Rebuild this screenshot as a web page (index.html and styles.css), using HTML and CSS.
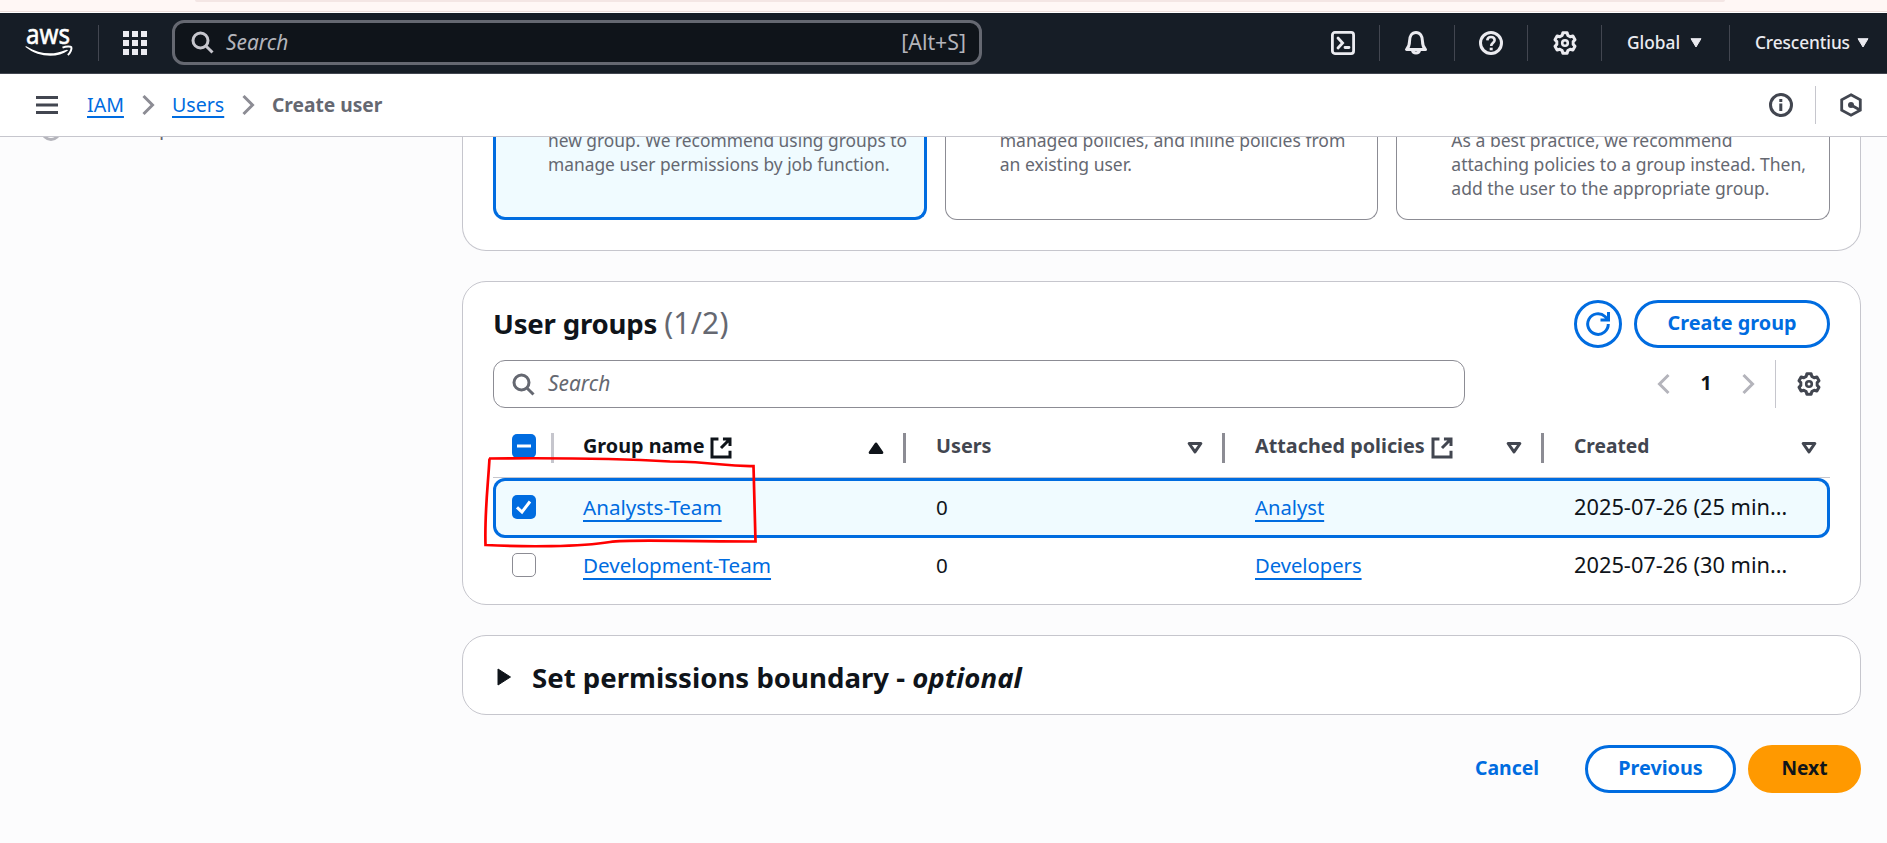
FILE: index.html
```html
<!DOCTYPE html>
<html lang="en">
<head>
<meta charset="utf-8">
<title>Create user | IAM</title>
<link rel="stylesheet" href="styles.css">
</head>
<body>
<svg class="defs" width="0" height="0">
  <symbol id="gear" viewBox="0 0 24 24"><path d="M9.9 1.7H14.1L14.8 4.4L17.2 5.8L19.9 5L22 8.7L20.2 10.6V13.4L22 15.3L19.9 19L17.2 18.2L14.8 19.6L14.1 22.3H9.9L9.2 19.6L6.8 18.2L4.1 19L2 15.3L3.8 13.4V10.6L2 8.7L4.1 5L6.8 5.8L9.2 4.4Z" stroke-width="3" stroke-linejoin="round"/><circle cx="12" cy="12" r="2.8" stroke-width="2.6"/></symbol>
  <symbol id="search" viewBox="0 0 16 16"><circle cx="7" cy="7" r="5"/><path d="M10.8 10.8 15 15"/></symbol>
  <symbol id="external" viewBox="0 0 16 16"><path d="M6.3 2H2v12h12v-4.2M9.3 2H14v4.6M13.8 2.2 8 8"/></symbol>
  <symbol id="sort" viewBox="0 0 16 16"><path d="M4.1 5h7.8L8 10.6Z" stroke-linejoin="round"/></symbol>
  <symbol id="right" viewBox="0 0 16 16"><path d="m5 2 6 6-6 6"/></symbol>
</svg>

<div class="browser-edge"><div class="address-bar"></div></div>

<header class="topnav">
  <svg class="logo" viewBox="0 0 48 32" width="48" height="32">
    <text x="1" y="17" textLength="44" lengthAdjust="spacingAndGlyphs">aws</text>
    <path class="smile" d="M.5 20C14 31 33 31 43 23.5C42.500 22.500 41.500 22.700 40 23.300C28 28.500 14 27 1.700 19.500C1 19.100.1 19.500.5 20Z"/>
    <path class="tip" d="M37.500 20.700C41.500 19 45.500 19.200 46.300 20.200C47 21.800 45.500 26 42.800 28"/>
  </svg>
  <span class="rule logo-rule"></span>
  <svg class="apps" viewBox="0 0 24 24" width="24" height="24"><path d="M0 0h6v6H0zM9 0h6v6H9zM18 0h6v6h-6zM0 9h6v6H0zM9 9h6v6H9zM18 9h6v6h-6zM0 18h6v6H0zM9 18h6v6H9zM18 18h6v6h-6z"/></svg>
  <div class="global-search">
    <svg class="icon" width="24" height="24"><use href="#search"/></svg>
    <span class="placeholder">Search</span>
    <span class="shortcut">[Alt+S]</span>
  </div>
  <div class="nav-tools">
    <div class="tool shell"><svg class="icon" viewBox="0 0 24 24" width="24" height="24"><rect x="1.4" y="1.4" width="21.2" height="21.2" rx="2.5" stroke-width="2.8"/><path d="m7 7 4.6 5L7 17M14 16.5h4" stroke-width="2.8" stroke-linecap="round"/></svg></div>
    <div class="tool bell"><svg class="icon" viewBox="0 0 24 24" width="24" height="24"><path d="M2.500 18.500h19c-2.600-2.600-3-5-3-8C18.500 5 16 1.600 12 1.600S5.500 5 5.500 10.500c0 3-.4 5.400-3 8Z" stroke-width="3" stroke-linejoin="round"/><path d="M8.500 19.500c.5 3.200 6.500 3.200 7 0" stroke-width="3"/></svg></div>
    <div class="tool help"><svg class="icon" viewBox="0 0 24 24" width="24" height="24"><circle cx="12" cy="12" r="10.500" stroke-width="3"/><path d="M8.300 9.400C8.500 4.700 15.600 5 15.600 9.200 15.600 11.700 12.200 11.800 12.200 15" stroke-width="2.600"/><path d="M10.700 16.700h3v2.600h-3z" fill="currentColor" stroke="none"/></svg></div>
    <div class="tool cog"><svg class="icon" width="24" height="24"><use href="#gear"/></svg></div>
    <div class="tool region"><span>Global</span><svg class="caret" viewBox="0 0 12 10" width="12" height="10"><path d="M1 .7h10L6 9Z"/></svg></div>
    <div class="tool account"><span>Crescentius</span><svg class="caret" viewBox="0 0 12 10" width="12" height="10"><path d="M1 .7h10L6 9Z"/></svg></div>
  </div>
</header>

<nav class="breadcrumbs">
  <svg class="burger" viewBox="0 0 22 18" width="22" height="18"><path d="M0 0h22v3H0zM0 7.500h22v3H0zM0 15h22v3H0z"/></svg>
  <a class="link crumb-iam">IAM</a>
  <svg class="icon chevron" width="24" height="24"><use href="#right"/></svg>
  <a class="link crumb-users">Users</a>
  <svg class="icon chevron" width="24" height="24"><use href="#right"/></svg>
  <span class="current">Create user</span>
  <div class="panel-tools">
    <svg class="icon" viewBox="0 0 24 24" width="24" height="24"><circle cx="12" cy="12" r="10.500" stroke-width="3"/><path d="M10.300 6h3v3h-3zM10.300 10.500h3v7.500h-3z" fill="currentColor" stroke="none"/></svg>
    <span class="panel-rule"></span>
    <svg class="icon" viewBox="0 0 24 24" width="24" height="24"><path d="M12 1.800 21.300 6.800V17.200L12 22.200 2.700 17.200V6.800Z" stroke-width="2.800"/><circle cx="12" cy="12" r="3" fill="currentColor" stroke="none"/><path d="m12 12 9 5" stroke-width="2.800"/></svg>
  </div>
</nav>

<div class="page">
  <aside class="steps"><span class="step-dot"></span><span class="step-text">Retrieve password</span></aside>
  <main class="content">
    <section class="panel options">
      <div class="tile selected"><p>new group. We recommend using groups to<br>manage user permissions by job function.</p></div>
      <div class="tile"><p>managed policies, and inline policies from<br>an existing user.</p></div>
      <div class="tile"><p>As a best practice, we recommend<br>attaching policies to a group instead. Then,<br>add the user to the appropriate group.</p></div>
    </section>

    <section class="panel groups">
      <div class="panel-head">
        <h2>User groups <span class="count">(1/2)</span></h2>
        <button class="btn round"><svg class="icon" viewBox="0 0 24 24" width="24" height="24"><path d="M22.300 12A10.300 10.300 0 1 1 19 4.500L21 6.500M22.500 0V8H14.500" stroke-width="3"/></svg></button>
        <button class="btn create">Create group</button>
      </div>
      <div class="filter">
        <div class="filter-input"><svg class="icon" width="24" height="24"><use href="#search"/></svg><span>Search</span></div>
        <div class="pager">
          <svg class="icon flip" width="24" height="24"><use href="#right"/></svg>
          <b>1</b>
          <svg class="icon" width="24" height="24"><use href="#right"/></svg>
        </div>
        <div class="prefs"><svg class="icon" width="24" height="24"><use href="#gear"/></svg></div>
      </div>

      <div class="table">
        <div class="row head">
          <div class="cell check"><span class="box on"><svg viewBox="0 0 24 24" width="24" height="24"><path d="M5 12h14"/></svg></span></div>
          <div class="cell sorted"><span class="name">Group name</span><svg class="icon ext" width="24" height="24"><use href="#external"/></svg><svg class="icon sort up" width="24" height="24"><use href="#sort"/></svg></div>
          <div class="cell"><span class="name">Users</span><svg class="icon sort" width="24" height="24"><use href="#sort"/></svg></div>
          <div class="cell"><span class="name">Attached policies</span><svg class="icon ext" width="24" height="24"><use href="#external"/></svg><svg class="icon sort" width="24" height="24"><use href="#sort"/></svg></div>
          <div class="cell"><span class="name short">Created</span><svg class="icon sort" width="24" height="24"><use href="#sort"/></svg></div>
        </div>
        <div class="row picked">
          <div class="cell check"><span class="box on"><svg viewBox="0 0 24 24" width="24" height="24"><path d="m5 12.300 5 4.700 8-10.500"/></svg></span></div>
          <div class="cell"><a class="link">Analysts-Team</a></div>
          <div class="cell">0</div>
          <div class="cell"><a class="link policy">Analyst</a></div>
          <div class="cell date">2025-07-26 (25 min…</div>
        </div>
        <div class="row last">
          <div class="cell check"><span class="box"></span></div>
          <div class="cell"><a class="link">Development-Team</a></div>
          <div class="cell">0</div>
          <div class="cell"><a class="link policy">Developers</a></div>
          <div class="cell date">2025-07-26 (30 min…</div>
        </div>
      </div>
    </section>

    <section class="panel boundary">
      <svg viewBox="0 0 15 18" width="15" height="18"><path d="M1 1 13.500 9 1 17Z"/></svg>
      <h2>Set permissions boundary - <em>optional</em></h2>
    </section>

    <div class="actions">
      <button class="btn plain">Cancel</button>
      <button class="btn previous">Previous</button>
      <button class="btn next">Next</button>
    </div>
  </main>
</div>

<svg class="markup" viewBox="0 0 280 96" width="280" height="96"><path d="M9.500 8.500C8 36 4.500 62 5.500 95 45 97 100 97 130 92 150 89 190 91.500 275.500 91.500L273.500 16C240 16.500 240 12 190 11.500 130 8 60 8 9 8.500"/></svg>
</body>
</html>
```
FILE: styles.css
```css
* { box-sizing: border-box; }
body { margin: 0; height: 843px; overflow: hidden; position: relative; display: flex; flex-direction: column; background: #fcfcfd; color: #0f141a; font: 20.600px/30px "Noto Sans", "Open Sans", sans-serif; }
h2, p { margin: 0; }
.defs { position: absolute; }
.icon { fill: none; stroke: currentColor; stroke-width: 2; flex: none; display: block; }
.link { color: #006ce0; text-decoration: underline; text-decoration-thickness: 2px; text-underline-offset: 5px; text-decoration-skip-ink: none; }

.browser-edge { height: 13px; flex: none; background: #fff7f5; border-bottom: 1px solid #fff; box-shadow: inset 0 -1px #ecdedb; }
.address-bar { height: 2px; margin: 0 162px 0 195px; background: #f4e6e4; border-radius: 0 0 8px 8px; }

.topnav { height: 61px; flex: none; display: flex; align-items: center; background: #161d26; border-bottom: 1px solid #424650; color: #ebebf0; padding: 0 0 1px 25px; }
.logo { fill: #fff; overflow: visible; }
.logo text { font: 28px "Noto Sans", sans-serif; stroke: #fff; stroke-width: .6px; }
.tip { fill: none; stroke: #fff; stroke-width: 2; }
.rule { width: 1px; height: 36px; background: #424650; }
.logo-rule { margin-left: 25px; }
.apps { fill: #ebebf0; margin-left: 24px; }
.global-search { width: 810px; height: 45px; margin-left: 25px; border: 3px solid #656871; border-radius: 12px; background: #0f141a; color: #b4b4bb; display: flex; align-items: center; padding: 0 13px 1px 15px; }
.global-search .icon { color: #c6c6cd; }
.placeholder { font-style: italic; font-size: 20.900px; margin-left: 12px; flex: 1; }
.shortcut { font-size: 21.300px; }
.nav-tools { margin-left: auto; display: flex; align-items: center; font-size: 17.300px; font-weight: 500; }
.tool { height: 36px; display: flex; align-items: center; border-left: 1px solid #424650; }
.shell { border: 0; width: 48px; }
.bell { width: 75px; padding-left: 24px; }
.help { width: 73px; padding-left: 24px; }
.cog { width: 74px; padding-left: 25px; }
.region { width: 128px; padding-left: 25px; }
.account { width: 158px; padding-left: 25px; letter-spacing: -.1px; }
.caret { fill: #ebebf0; stroke: #ebebf0; stroke-linejoin: round; margin-left: auto; }
.region .caret { margin-right: 27px; }
.account .caret { margin-right: 18px; }

.breadcrumbs { height: 63px; flex: none; display: flex; align-items: center; background: #fff; border-bottom: 1px solid #c6c6cd; padding-left: 36px; }
.burger { fill: #424650; }
.crumb-iam, .crumb-users { font-size: 19.600px; text-underline-offset: 4px; }
.crumb-iam { margin-left: 29px; width: 37px; }
.crumb-users { width: 52px; }
.chevron { color: #8c8c94; margin: 0 12px; }
.current { font-weight: 700; font-size: 19.200px; color: #656871; }
.panel-tools { margin-left: auto; margin-right: 24px; display: flex; align-items: center; gap: 22px; color: #424650; }
.panel-rule { width: 1px; height: 38px; background: #c6c6cd; margin-right: 1px; }

.page { flex: 1; min-height: 0; display: flex; overflow: hidden; }
.steps { width: 462px; flex: none; margin-top: -21px; display: flex; align-items: flex-start; }
.step-dot { width: 20px; height: 20px; margin: 5px 0 0 41px; border: 3px solid #b4b4bb; border-radius: 50%; }
.step-text { margin-left: 16px; font-size: 20px; line-height: 24px; color: #656871; }
.content { width: 1399px; }
.panel { background: #fff; border: 1px solid #c6c6cd; border-radius: 24px; }

.options { height: 114px; border-top: 0; border-radius: 0 0 24px 24px; padding: 0 30px 31px; display: grid; grid-template-columns: repeat(3, 1fr); gap: 18px; }
.tile { border: 1px solid #8c8c94; border-top: 0; border-radius: 0 0 12px 12px; padding-left: 54px; height: 83px; color: #656871; font-size: 17.550px; line-height: 24px; white-space: nowrap; display: flex; }
.tile p { margin-top: -9px; }
.tile.selected { border: 3px solid #006ce0; border-top: 0; background: #f0fbff; padding-left: 52px; font-size: 17.370px; }

.groups { height: 324px; margin-top: 30px; padding: 18px 30px 0; }
.panel-head { display: flex; align-items: center; height: 48px; }
h2 { font-size: 27.600px; line-height: 36px; font-weight: 700; }
.panel-head h2 { letter-spacing: -.2px; margin-top: -2px; }
.count { font-weight: 400; color: #656871; font-size: 30px; letter-spacing: .2px; }
.btn { height: 48px; border: 3px solid #006ce0; border-radius: 24px; background: #fff; color: #006ce0; font: 700 19.800px/24px "Noto Sans", "Open Sans", sans-serif; padding: 0 0 2px; }
.round { width: 48px; margin-left: auto; display: grid; place-items: center; padding: 0; }
.create { width: 196px; margin-left: 12px; }
.filter { display: flex; height: 48px; margin-top: 12px; }
.filter-input { width: 972px; border: 1px solid #8c8c94; border-radius: 12px; display: flex; align-items: center; padding-left: 17px; gap: 13px; color: #656871; font-size: 20.900px; font-style: italic; }
.filter-input span, .pager b { margin-top: -2px; }
.pager { margin-left: auto; display: flex; align-items: center; color: #b4b4bb; }
.pager b { width: 60px; text-align: center; font-size: 19.600px; color: #0f141a; font-weight: 700; }
.flip { transform: scaleX(-1); }
.prefs { margin-left: 15px; border-left: 1px solid #c6c6cd; width: 55px; padding-left: 21px; display: flex; align-items: center; color: #424650; }

.row { display: grid; grid-template-columns: 58px 352px 319px 319px 1fr; align-items: center; }
.cell { padding-left: 33px; white-space: nowrap; display: flex; align-items: center; }
.cell:nth-child(2) { padding-left: 32px; }
.cell.check { padding-left: 19px; }
.head { height: 70px; padding-top: 12px; border-bottom: 1px solid #c6c6cd; color: #424650; font-weight: 700; font-size: 19.800px; }
.head .cell:not(.check) { border-left: 3px solid #8c8c94; height: 30px; padding-left: 30px; margin-bottom: 2px; }
.head .cell.sorted:not(.check) { border-left-color: #c6c6cd; color: #0f141a; padding-left: 29px; }
.head .check { margin-bottom: 6px; }
.name { margin-top: -4px; }
.short { font-size: 19.200px; }
.ext { margin-left: 5px; }
.sort { margin: 0 15px 0 auto; }
.head .cell:last-child .sort { margin-right: 9px; }
.up { transform: rotate(180deg); fill: currentColor; }
.picked { height: 60px; padding-bottom: 2px; background: #f0fbff; box-shadow: inset 0 0 0 3px #006ce0; border-radius: 12px; }
.last { height: 54px; }
.picked .cell:not(.check), .last .cell:not(.check) { margin-top: -1px; }
.policy { font-size: 20.200px; }
.date { font-size: 21.800px; }
.box { width: 24px; height: 24px; border: 1.500px solid #8c8c94; border-radius: 5px; background: #fff; }
.box.on { background: #006ce0; border: 0; }
.box svg { display: block; fill: none; stroke: #fff; stroke-width: 3; }

.boundary { height: 80px; margin-top: 30px; display: flex; align-items: center; padding: 4px 0 0 34px; gap: 20px; }
.boundary h2 { margin-top: -1px; }
.boundary svg { fill: #0f141a; stroke: #0f141a; stroke-linejoin: round; }
.actions { display: flex; justify-content: flex-end; margin-top: 30px; gap: 12px; }
.plain { border-color: transparent; background: none; width: 130px; margin-right: 1px; font-size: 19.400px; }
.previous { width: 151px; }
.next { width: 113px; background: #ff9900; border-color: #ff9900; color: #0f141a; font-size: 19.200px; }

.markup { position: absolute; left: 480px; top: 450px; fill: none; stroke: #f00; stroke-width: 2.700; overflow: visible; }
```
